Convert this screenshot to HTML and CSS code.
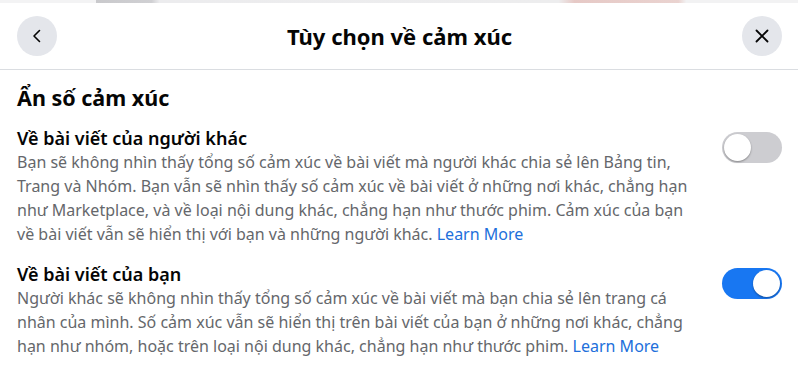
FILE: index.html
```html
<!DOCTYPE html>
<html lang="vi">
<head>
<meta charset="utf-8">
<link rel="stylesheet" href="styles.css">
</head>
<body>
<div class="backdrop"></div>
<div class="dialog">
  <header class="header">
    <button class="circle-btn" aria-label="Quay lại">
      <svg width="20" height="20" viewBox="0 0 20 20"><path d="M12.5 4.5 L7 10 L12.5 15.5" fill="none" stroke="#050505" stroke-width="1.6" stroke-linecap="round" stroke-linejoin="round"/></svg>
    </button>
    <h1 class="title">Tùy chọn về cảm xúc</h1>
    <button class="circle-btn" aria-label="Đóng">
      <svg width="20" height="20" viewBox="0 0 20 20"><path d="M4.5 4.5 L15.5 15.5 M15.5 4.5 L4.5 15.5" fill="none" stroke="#050505" stroke-width="1.8" stroke-linecap="round"/></svg>
    </button>
  </header>
  <main class="content">
    <h2 class="heading">Ẩn số cảm xúc</h2>
    <section class="option">
      <div class="option-text">
        <h3 class="option-title">Về bài viết của người khác</h3>
        <p class="option-desc">Bạn sẽ không nhìn thấy tổng số cảm xúc về bài viết mà người khác chia sẻ lên Bảng tin, Trang và Nhóm. Bạn vẫn sẽ nhìn thấy số cảm xúc về bài viết ở những nơi khác, chẳng hạn như Marketplace, và về loại nội dung khác, chẳng hạn như thước phim. Cảm xúc của bạn về bài viết vẫn sẽ hiển thị với bạn và những người khác. <a class="link" href="#">Learn More</a></p>
      </div>
      <span class="toggle"><span class="knob"></span></span>
    </section>
    <section class="option">
      <div class="option-text">
        <h3 class="option-title">Về bài viết của bạn</h3>
        <p class="option-desc">Người khác sẽ không nhìn thấy tổng số cảm xúc về bài viết mà bạn chia sẻ lên trang cá nhân của mình. Số cảm xúc vẫn sẽ hiển thị trên bài viết của bạn ở những nơi khác, chẳng hạn như nhóm, hoặc trên loại nội dung khác, chẳng hạn như thước phim. <a class="link" href="#">Learn More</a></p>
      </div>
      <span class="toggle on"><span class="knob"></span></span>
    </section>
  </main>
</div>
</body>
</html>
```

FILE: styles.css
```css
* { box-sizing: border-box; }
html, body {
  margin: 0;
  padding: 0;
  background: #ffffff;
  font-family: "Noto Sans", "Open Sans", sans-serif;
  color: #050505;
}
.backdrop {
  height: 3px;
  background: linear-gradient(90deg, #f3f3f4 0%, #f3f3f4 12%, #c9c9cc 12%, #d0d0d3 19%, #ececee 20%, #ededee 70%, #e6c9c6 72%, #ead3d0 85%, #f2f2f3 86%, #f2f2f3 100%);
}
.dialog {
  background: #fff;
  border-radius: 8px 8px 0 0;
}
.header {
  display: flex;
  align-items: center;
  justify-content: space-between;
  height: 67px;
  padding: 0 16px 0 17px;
  border-bottom: 1px solid #dadde1;
}
.circle-btn {
  width: 40px;
  height: 40px;
  border-radius: 50%;
  border: none;
  background: #e4e6eb;
  display: flex;
  align-items: center;
  justify-content: center;
  padding: 0;
}
.title {
  margin: 0;
  font-size: 22px;
  font-weight: 700;
  line-height: 26px;
}
.content {
  padding: 16px 16px 0 17px;
}
.heading {
  margin: 0 0 16px;
  font-size: 21.5px;
  font-weight: 700;
  line-height: 24px;
}
.option {
  display: flex;
  align-items: flex-start;
  justify-content: space-between;
  margin-bottom: 16px;
}
.option-text {
  flex: none;
  width: 682px;
}
.option-title {
  margin: 0;
  font-size: 18px;
  font-weight: 600;
  line-height: 24px;
}
.option-desc {
  margin: 0;
  font-size: 16px;
  line-height: 24px;
  color: #65676b;
}
.link {
  color: #216fdb;
  text-decoration: none;
}
.toggle {
  flex: none;
  position: relative;
  width: 60px;
  height: 31px;
  margin-top: 6px;
  border-radius: 16px;
  background: #cdcdd1;
}
.toggle .knob {
  position: absolute;
  top: 2px;
  left: 2px;
  width: 27px;
  height: 27px;
  border-radius: 50%;
  background: #fff;
  box-shadow: 0 1px 2px rgba(0,0,0,0.35);
}
.toggle.on { background: #1877f2; }
.toggle.on .knob { left: auto; right: 2px; }
```
